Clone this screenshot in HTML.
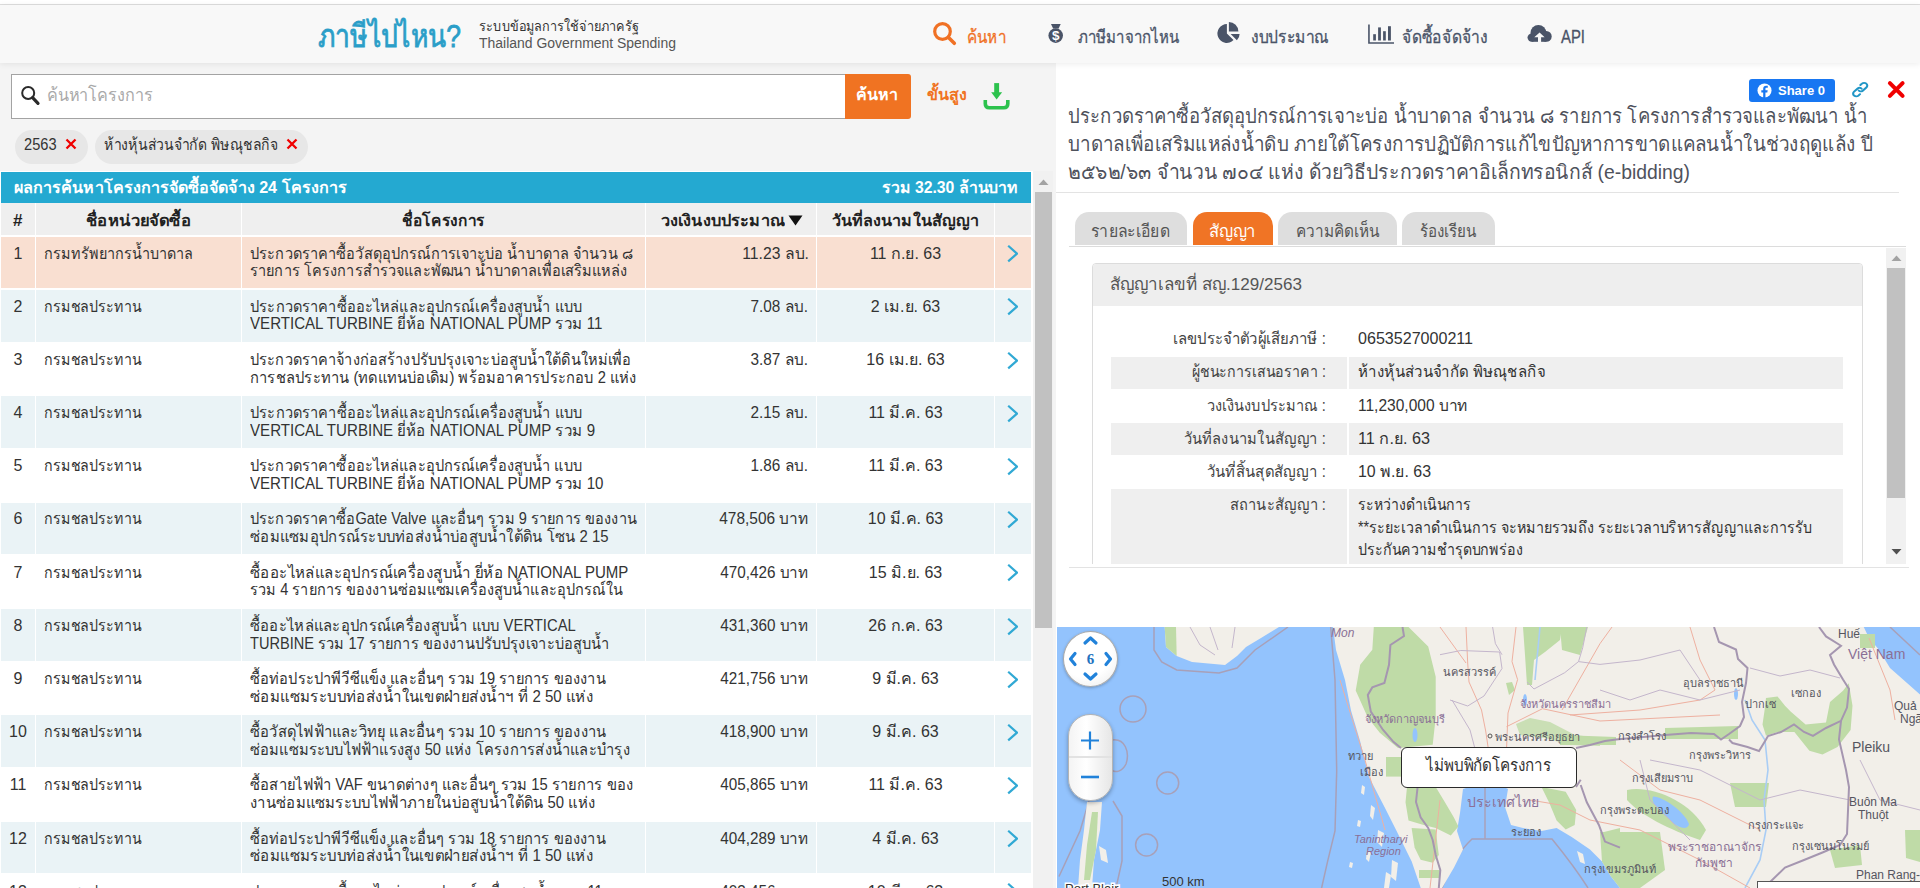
<!DOCTYPE html>
<html><head><meta charset="utf-8">
<style>
*{box-sizing:border-box}
html,body{margin:0;padding:0}
body{width:1920px;height:888px;overflow:hidden;position:relative;background:#f4f4f4;font-family:"Liberation Sans",sans-serif;color:#333}
.a{position:absolute}
.nw{white-space:nowrap}
#topw{left:0;top:0;width:1920px;height:4px;background:#fff}
#topline{left:0;top:4px;width:1920px;height:1px;background:#dedede}
#hdr{left:0;top:5px;width:1920px;height:58px;background:#f8f8f8;z-index:5;box-shadow:0 1px 6px rgba(0,0,0,0.08)}
.nav{top:17px;height:30px;line-height:30px;font-size:18px;-webkit-text-stroke:0.3px currentColor;color:#4a5468}
#right{left:1056px;top:63px;width:864px;height:825px;background:#fff}
.row .t{font-size:16px;color:#333;line-height:18px;top:7.8px}
.row .num{text-align:center}
.row .ag{left:44px}
.row .pj{left:250px}
.row .bd{right:223.5px;text-align:right}
.row .dt{left:817px;width:177px;text-align:center}
.row .chev{left:1006px;top:7.5px}
.th{font-size:16px;font-weight:bold;color:#222;top:211px;line-height:20px}
.tab{top:212px;height:33px;border-radius:14px 14px 0 0;background:#dedede}
.tabt{top:221px;font-size:17px;line-height:22px;color:#555}
.ttl{left:1068px;margin-top:1px;font-size:20px;line-height:28px;color:#4f525c}
.lbl{right:594px;margin-top:1px;font-size:16px;color:#444;line-height:20px}
.val{left:1358px;margin-top:1px;font-size:16px;color:#333;line-height:20px}
.grow{left:1111px;width:732px;background:#efefef}
.f{transform-origin:0 50%}
.fr{transform-origin:100% 50%}

</style></head><body>
<div id="topw" class="a"></div>
<div id="topline" class="a"></div>
<div id="hdr" class="a">
  <div class="a nw f" style="transform:scaleX(0.8276);--w:143px;left:318px;top:11px;font-size:32px;-webkit-text-stroke:0.8px #2a9ec8;color:#2a9ec8;line-height:40px">ภาษีไปไหน?</div>
  <div class="a nw f" style="transform:scaleX(0.904);--w:160px;left:479px;top:11px;font-size:14px;font-weight:500;color:#333;line-height:20px">ระบบข้อมูลการใช้จ่ายภาครัฐ</div>
  <div class="a nw f" style="transform:scaleX(0.9965);--w:197px;left:479px;top:28px;font-size:14px;color:#555;line-height:20px">Thailand Government Spending</div>
  <svg class="a" style="left:932px;top:16px" width="26" height="26" viewBox="0 0 26 26"><circle cx="10.5" cy="10.5" r="7.8" fill="none" stroke="#f07125" stroke-width="3.2"/><path d="M16.5 16.5 L22.3 22.3" stroke="#f07125" stroke-width="3.6" stroke-linecap="round"/></svg>
  <div class="a nw nav f" style="transform:scaleX(0.8478);--w:39px;left:967px;color:#f07125">ค้นหา</div>
  <svg class="a" style="left:1046px;top:17px" width="20" height="27" viewBox="0 0 20 27"><path d="M5 2 H14.7 L12.6 6.6 H7.1 Z" fill="#4a5468"/><circle cx="9.7" cy="13.6" r="7.3" fill="#4a5468"/><text x="9.8" y="18.4" font-size="13.5" font-weight="bold" fill="#fff" text-anchor="middle" font-family="Liberation Sans">$</text></svg>
  <div class="a nw nav f" style="transform:scaleX(0.8347);--w:101px;left:1078px">ภาษีมาจากไหน</div>
  <svg class="a" style="left:1216px;top:16px" width="26" height="24" viewBox="0 0 26 24"><path d="M10.9 3.1 A9.4 9.4 0 1 0 17.5 19.1 L10.9 12.5 Z" fill="#4a5468"/><path d="M12.9 10.5 V1.1 A9.5 9.5 0 0 1 22.4 10.5 Z" fill="#4a5468"/><path d="M14.6 12.9 H23.6 A9 9 0 0 1 20.9 19.3 Z" fill="#4a5468"/></svg>
  <div class="a nw nav f" style="transform:scaleX(0.8667);--w:78px;left:1251px">งบประมาณ</div>
  <svg class="a" style="left:1367px;top:19px" width="28" height="21" viewBox="0 0 28 21"><path d="M1.95 0.4 V18.95 H27" fill="none" stroke="#4a5468" stroke-width="1.6"/><rect x="6.2" y="10.2" width="2.7" height="6.3" fill="#4a5468"/><rect x="11.1" y="3.4" width="2.8" height="13.1" fill="#4a5468"/><rect x="16.1" y="7.2" width="2.7" height="9.3" fill="#4a5468"/><rect x="21" y="2.2" width="2.9" height="14.3" fill="#4a5468"/></svg>
  <div class="a nw nav f" style="transform:scaleX(0.8687);--w:86px;left:1402px">จัดซื้อจัดจ้าง</div>
  <svg class="a" style="left:1526px;top:19px" width="27" height="20" viewBox="0 0 27 20"><g fill="#4a5468"><circle cx="12.4" cy="8.9" r="7.9"/><circle cx="20.3" cy="12.4" r="5.4"/><circle cx="5.7" cy="13.6" r="4.2"/><rect x="5.7" y="10" width="14.6" height="7.8"/></g><path d="M8.3 13.2 L13.6 8.6 L18.6 13.3 L15.1 13.3 L15.1 19 L12 19 L12 13.2 Z" fill="#f8f8f8"/></svg>
  <div class="a nw nav f" style="transform:scaleX(0.8271);--w:24px;left:1561px">API</div>
</div>

<!-- search -->
<div class="a" style="left:11px;top:74px;width:835px;height:45px;background:#fff;border:1px solid #a3a3a3;border-right:none"></div>
<svg class="a" style="left:19px;top:85px" width="22" height="22" viewBox="0 0 22 22"><circle cx="9.2" cy="8" r="6" fill="none" stroke="#2a2a2a" stroke-width="2"/><path d="M13.6 12.6 L19 18.3" stroke="#2a2a2a" stroke-width="3.2" stroke-linecap="round"/></svg>
<div class="a nw f" style="transform:scaleX(0.8983);--w:106px;left:47px;top:83px;font-size:18px;line-height:24px;color:#a9a9a9">ค้นหาโครงการ</div>
<div class="a" style="left:845px;top:74px;width:66px;height:45px;background:#f07322;border-radius:0 3px 3px 0"></div>
<div class="a nw f" style="transform:scaleX(1);--w:42px;left:856px;top:84px;font-size:16px;font-weight:bold;line-height:22px;color:#fff">ค้นหา</div>
<div class="a nw f" style="transform:scaleX(1);--w:40px;left:927px;top:84px;font-size:16px;font-weight:bold;line-height:22px;color:#f07322">ขั้นสูง</div>
<svg class="a" style="left:982px;top:82px" width="29" height="29" viewBox="0 0 29 29"><path d="M14.65 1.1 V12" stroke="#2cc24d" stroke-width="4.9"/><path d="M9.2 10.2 L20.1 10.2 L14.65 17.6 Z" fill="#2cc24d"/><path d="M3.3 17.9 V21.8 Q3.3 25.8 7.3 25.8 H21.8 Q25.8 25.8 25.8 21.8 V17.9" fill="none" stroke="#2cc24d" stroke-width="3.6"/></svg>

<!-- chips -->
<div class="a" style="left:15px;top:130px;width:73px;height:34px;border-radius:17px;background:#e7e7e7"></div>
<div class="a nw f" style="transform:scaleX(0.9131);--w:32.5px;left:24px;top:136px;font-size:16px;line-height:18px;color:#333">2563</div>
<svg class="a" style="left:65px;top:138px" width="12" height="12" viewBox="0 0 12 12"><path d="M1.5 1.5 L10.5 10.5 M10.5 1.5 L1.5 10.5" stroke="#f00000" stroke-width="2.3"/></svg>
<div class="a" style="left:95px;top:130px;width:213px;height:34px;border-radius:17px;background:#e7e7e7"></div>
<div class="a nw f" style="transform:scaleX(0.8724);--w:174px;left:104px;top:136px;font-size:16px;line-height:18px;color:#333">ห้างหุ้นส่วนจำกัด พิษณุชลกิจ</div>
<svg class="a" style="left:286px;top:138px" width="12" height="12" viewBox="0 0 12 12"><path d="M1.5 1.5 L10.5 10.5 M10.5 1.5 L1.5 10.5" stroke="#f00000" stroke-width="2.3"/></svg>

<!-- results table -->
<div class="a" style="left:0;top:171px;width:1033px;height:717px;background:#fff"></div>
<div class="a" style="left:1px;top:172px;width:1030px;height:31px;background:#24a9d1"></div>
<div class="a nw f" style="transform:scaleX(1.007);--w:333px;left:14px;top:178px;font-size:16px;font-weight:bold;line-height:20px;color:#fff">ผลการค้นหาโครงการจัดซื้อจัดจ้าง 24 โครงการ</div>
<div class="a nw fr" style="transform:scaleX(0.986);--w:136px;right:902px;top:178px;font-size:16px;font-weight:bold;line-height:20px;color:#fff">รวม 32.30 ล้านบาท</div>
<div class="a" style="left:1px;top:203px;width:34px;height:31.7px;background:#efefef"></div>
<div class="a" style="left:36px;top:203px;width:205px;height:31.7px;background:#efefef"></div>
<div class="a" style="left:242px;top:203px;width:403px;height:31.7px;background:#efefef"></div>
<div class="a" style="left:646px;top:203px;width:170px;height:31.7px;background:#efefef"></div>
<div class="a" style="left:817px;top:203px;width:177px;height:31.7px;background:#efefef"></div>
<div class="a" style="left:995px;top:203px;width:36px;height:31.7px;background:#efefef"></div>
<div class="a nw th" style="left:13px;font-size:17px">#</div>
<div class="a nw th f" style="transform:scaleX(1.0396);--w:105px;left:86px">ชื่อหน่วยจัดซื้อ</div>
<div class="a nw th f" style="transform:scaleX(0.9651);--w:83px;left:402px">ชื่อโครงการ</div>
<div class="a nw th f" style="transform:scaleX(1.0164);--w:124px;left:661px">วงเงินงบประมาณ</div><svg class="a" style="left:788px;top:215px" width="15" height="11" viewBox="0 0 15 11"><path d="M0.5 0.5 H14.5 L7.5 10.5 Z" fill="#111"/></svg>
<div class="a nw th f" style="transform:scaleX(1.0068);--w:147px;left:832px">วันที่ลงนามในสัญญา</div>
<div class="a row" style="left:0;top:236.80px;width:1032px;height:51.7px"><div class="a" style="left:1px;top:0;width:34px;height:51.7px;background:#f9dfd1"></div><div class="a" style="left:36px;top:0;width:205px;height:51.7px;background:#f9dfd1"></div><div class="a" style="left:242px;top:0;width:403px;height:51.7px;background:#f9dfd1"></div><div class="a" style="left:646px;top:0;width:170px;height:51.7px;background:#f9dfd1"></div><div class="a" style="left:817px;top:0;width:177px;height:51.7px;background:#f9dfd1"></div><div class="a" style="left:995px;top:0;width:36px;height:51.7px;background:#f9dfd1"></div><div class="a nw t num" style="left:1px;width:34px">1</div><div class="a nw t ag f" style="transform:scaleX(0.8976);--w:149px">กรมทรัพยากรน้ำบาดาล</div><div class="a nw t pj f" style="transform:scaleX(0.908);--w:382.6px">ประกวดราคาซื้อวัสดุอุปกรณ์การเจาะบ่อ น้ำบาดาล จำนวน ๘</div><div class="a nw t pj f" style="transform:scaleX(0.906);--w:377.7px;top:25.5px">รายการ โครงการสำรวจและพัฒนา น้ำบาดาลเพื่อเสริมแหล่ง</div><div class="a nw t bd fr" style="transform:scaleX(0.9815);--w:66.5px">11.23 ลบ.</div><div class="a nw t dt">11 ก.ย. 63</div><svg class="a chev" width="12" height="20" viewBox="0 0 12 20"><path d="M2.2 1.8 L11 9.6 L2.2 17.4" fill="none" stroke="#31a9d4" stroke-width="2.2"/></svg></div>
<div class="a row" style="left:0;top:289.98px;width:1032px;height:51.7px"><div class="a" style="left:1px;top:0;width:34px;height:51.7px;background:#eaf3f6"></div><div class="a" style="left:36px;top:0;width:205px;height:51.7px;background:#eaf3f6"></div><div class="a" style="left:242px;top:0;width:403px;height:51.7px;background:#eaf3f6"></div><div class="a" style="left:646px;top:0;width:170px;height:51.7px;background:#eaf3f6"></div><div class="a" style="left:817px;top:0;width:177px;height:51.7px;background:#eaf3f6"></div><div class="a" style="left:995px;top:0;width:36px;height:51.7px;background:#eaf3f6"></div><div class="a nw t num" style="left:1px;width:34px">2</div><div class="a nw t ag f" style="transform:scaleX(0.8864);--w:97.5px">กรมชลประทาน</div><div class="a nw t pj f" style="transform:scaleX(0.911);--w:332px">ประกวดราคาซื้ออะไหล่และอุปกรณ์เครื่องสูบน้ำ แบบ</div><div class="a nw t pj f" style="transform:scaleX(0.9429);--w:352.4px;top:25.5px">VERTICAL TURBINE ยี่ห้อ NATIONAL PUMP รวม 11</div><div class="a nw t bd fr" style="transform:scaleX(0.9578);--w:57.5px">7.08 ลบ.</div><div class="a nw t dt">2 เม.ย. 63</div><svg class="a chev" width="12" height="20" viewBox="0 0 12 20"><path d="M2.2 1.8 L11 9.6 L2.2 17.4" fill="none" stroke="#31a9d4" stroke-width="2.2"/></svg></div>
<div class="a row" style="left:0;top:343.16px;width:1032px;height:51.7px"><div class="a" style="left:1px;top:0;width:34px;height:51.7px;background:#ffffff"></div><div class="a" style="left:36px;top:0;width:205px;height:51.7px;background:#ffffff"></div><div class="a" style="left:242px;top:0;width:403px;height:51.7px;background:#ffffff"></div><div class="a" style="left:646px;top:0;width:170px;height:51.7px;background:#ffffff"></div><div class="a" style="left:817px;top:0;width:177px;height:51.7px;background:#ffffff"></div><div class="a" style="left:995px;top:0;width:36px;height:51.7px;background:#ffffff"></div><div class="a nw t num" style="left:1px;width:34px">3</div><div class="a nw t ag f" style="transform:scaleX(0.8864);--w:97.5px">กรมชลประทาน</div><div class="a nw t pj f" style="transform:scaleX(0.9081);--w:381.4px">ประกวดราคาจ้างก่อสร้างปรับปรุงเจาะบ่อสูบน้ำใต้ดินใหม่เพื่อ</div><div class="a nw t pj f" style="transform:scaleX(0.92);--w:386.7px;top:25.5px">การชลประทาน (ทดแทนบ่อเดิม) พร้อมอาคารประกอบ 2 แห่ง</div><div class="a nw t bd fr" style="transform:scaleX(0.9578);--w:57.5px">3.87 ลบ.</div><div class="a nw t dt">16 เม.ย. 63</div><svg class="a chev" width="12" height="20" viewBox="0 0 12 20"><path d="M2.2 1.8 L11 9.6 L2.2 17.4" fill="none" stroke="#31a9d4" stroke-width="2.2"/></svg></div>
<div class="a row" style="left:0;top:396.34px;width:1032px;height:51.7px"><div class="a" style="left:1px;top:0;width:34px;height:51.7px;background:#eaf3f6"></div><div class="a" style="left:36px;top:0;width:205px;height:51.7px;background:#eaf3f6"></div><div class="a" style="left:242px;top:0;width:403px;height:51.7px;background:#eaf3f6"></div><div class="a" style="left:646px;top:0;width:170px;height:51.7px;background:#eaf3f6"></div><div class="a" style="left:817px;top:0;width:177px;height:51.7px;background:#eaf3f6"></div><div class="a" style="left:995px;top:0;width:36px;height:51.7px;background:#eaf3f6"></div><div class="a nw t num" style="left:1px;width:34px">4</div><div class="a nw t ag f" style="transform:scaleX(0.8864);--w:97.5px">กรมชลประทาน</div><div class="a nw t pj f" style="transform:scaleX(0.911);--w:332px">ประกวดราคาซื้ออะไหล่และอุปกรณ์เครื่องสูบน้ำ แบบ</div><div class="a nw t pj f" style="transform:scaleX(0.943);--w:345.2px;top:25.5px">VERTICAL TURBINE ยี่ห้อ NATIONAL PUMP รวม 9</div><div class="a nw t bd fr" style="transform:scaleX(0.9578);--w:57.5px">2.15 ลบ.</div><div class="a nw t dt">11 มี.ค. 63</div><svg class="a chev" width="12" height="20" viewBox="0 0 12 20"><path d="M2.2 1.8 L11 9.6 L2.2 17.4" fill="none" stroke="#31a9d4" stroke-width="2.2"/></svg></div>
<div class="a row" style="left:0;top:449.52px;width:1032px;height:51.7px"><div class="a" style="left:1px;top:0;width:34px;height:51.7px;background:#ffffff"></div><div class="a" style="left:36px;top:0;width:205px;height:51.7px;background:#ffffff"></div><div class="a" style="left:242px;top:0;width:403px;height:51.7px;background:#ffffff"></div><div class="a" style="left:646px;top:0;width:170px;height:51.7px;background:#ffffff"></div><div class="a" style="left:817px;top:0;width:177px;height:51.7px;background:#ffffff"></div><div class="a" style="left:995px;top:0;width:36px;height:51.7px;background:#ffffff"></div><div class="a nw t num" style="left:1px;width:34px">5</div><div class="a nw t ag f" style="transform:scaleX(0.8864);--w:97.5px">กรมชลประทาน</div><div class="a nw t pj f" style="transform:scaleX(0.9104);--w:331.8px">ประกวดราคาซื้ออะไหล่และอุปกรณ์เครื่องสูบน้ำ แบบ</div><div class="a nw t pj f" style="transform:scaleX(0.9426);--w:353.4px;top:25.5px">VERTICAL TURBINE ยี่ห้อ NATIONAL PUMP รวม 10</div><div class="a nw t bd fr" style="transform:scaleX(0.9578);--w:57.5px">1.86 ลบ.</div><div class="a nw t dt">11 มี.ค. 63</div><svg class="a chev" width="12" height="20" viewBox="0 0 12 20"><path d="M2.2 1.8 L11 9.6 L2.2 17.4" fill="none" stroke="#31a9d4" stroke-width="2.2"/></svg></div>
<div class="a row" style="left:0;top:502.70px;width:1032px;height:51.7px"><div class="a" style="left:1px;top:0;width:34px;height:51.7px;background:#eaf3f6"></div><div class="a" style="left:36px;top:0;width:205px;height:51.7px;background:#eaf3f6"></div><div class="a" style="left:242px;top:0;width:403px;height:51.7px;background:#eaf3f6"></div><div class="a" style="left:646px;top:0;width:170px;height:51.7px;background:#eaf3f6"></div><div class="a" style="left:817px;top:0;width:177px;height:51.7px;background:#eaf3f6"></div><div class="a" style="left:995px;top:0;width:36px;height:51.7px;background:#eaf3f6"></div><div class="a nw t num" style="left:1px;width:34px">6</div><div class="a nw t ag f" style="transform:scaleX(0.8864);--w:97.5px">กรมชลประทาน</div><div class="a nw t pj f" style="transform:scaleX(0.9099);--w:386.8px">ประกวดราคาซื้อGate Valve และอื่นๆ รวม 9 รายการ ของงาน</div><div class="a nw t pj f" style="transform:scaleX(0.9311);--w:358.5px;top:25.5px">ซ่อมแซมอุปกรณ์ระบบท่อส่งน้ำบ่อสูบน้ำใต้ดิน โซน 2 15</div><div class="a nw t bd fr" style="transform:scaleX(0.9644);--w:89px">478,506 บาท</div><div class="a nw t dt">10 มี.ค. 63</div><svg class="a chev" width="12" height="20" viewBox="0 0 12 20"><path d="M2.2 1.8 L11 9.6 L2.2 17.4" fill="none" stroke="#31a9d4" stroke-width="2.2"/></svg></div>
<div class="a row" style="left:0;top:555.88px;width:1032px;height:51.7px"><div class="a" style="left:1px;top:0;width:34px;height:51.7px;background:#ffffff"></div><div class="a" style="left:36px;top:0;width:205px;height:51.7px;background:#ffffff"></div><div class="a" style="left:242px;top:0;width:403px;height:51.7px;background:#ffffff"></div><div class="a" style="left:646px;top:0;width:170px;height:51.7px;background:#ffffff"></div><div class="a" style="left:817px;top:0;width:177px;height:51.7px;background:#ffffff"></div><div class="a" style="left:995px;top:0;width:36px;height:51.7px;background:#ffffff"></div><div class="a nw t num" style="left:1px;width:34px">7</div><div class="a nw t ag f" style="transform:scaleX(0.8864);--w:97.5px">กรมชลประทาน</div><div class="a nw t pj f" style="transform:scaleX(0.9392);--w:378.3px">ซื้ออะไหล่และอุปกรณ์เครื่องสูบน้ำ ยี่ห้อ NATIONAL PUMP</div><div class="a nw t pj f" style="transform:scaleX(0.9041);--w:372.7px;top:25.5px">รวม 4 รายการ ของงานซ่อมแซมเครื่องสูบน้ำและอุปกรณ์ใน</div><div class="a nw t bd fr" style="transform:scaleX(0.9536);--w:88px">470,426 บาท</div><div class="a nw t dt">15 มิ.ย. 63</div><svg class="a chev" width="12" height="20" viewBox="0 0 12 20"><path d="M2.2 1.8 L11 9.6 L2.2 17.4" fill="none" stroke="#31a9d4" stroke-width="2.2"/></svg></div>
<div class="a row" style="left:0;top:609.06px;width:1032px;height:51.7px"><div class="a" style="left:1px;top:0;width:34px;height:51.7px;background:#eaf3f6"></div><div class="a" style="left:36px;top:0;width:205px;height:51.7px;background:#eaf3f6"></div><div class="a" style="left:242px;top:0;width:403px;height:51.7px;background:#eaf3f6"></div><div class="a" style="left:646px;top:0;width:170px;height:51.7px;background:#eaf3f6"></div><div class="a" style="left:817px;top:0;width:177px;height:51.7px;background:#eaf3f6"></div><div class="a" style="left:995px;top:0;width:36px;height:51.7px;background:#eaf3f6"></div><div class="a nw t num" style="left:1px;width:34px">8</div><div class="a nw t ag f" style="transform:scaleX(0.8864);--w:97.5px">กรมชลประทาน</div><div class="a nw t pj f" style="transform:scaleX(0.926);--w:325.8px">ซื้ออะไหล่และอุปกรณ์เครื่องสูบน้ำ แบบ VERTICAL</div><div class="a nw t pj f" style="transform:scaleX(0.9103);--w:359.4px;top:25.5px">TURBINE รวม 17 รายการ ของงานปรับปรุงเจาะบ่อสูบน้ำ</div><div class="a nw t bd fr" style="transform:scaleX(0.9536);--w:88px">431,360 บาท</div><div class="a nw t dt">26 ก.ค. 63</div><svg class="a chev" width="12" height="20" viewBox="0 0 12 20"><path d="M2.2 1.8 L11 9.6 L2.2 17.4" fill="none" stroke="#31a9d4" stroke-width="2.2"/></svg></div>
<div class="a row" style="left:0;top:662.24px;width:1032px;height:51.7px"><div class="a" style="left:1px;top:0;width:34px;height:51.7px;background:#ffffff"></div><div class="a" style="left:36px;top:0;width:205px;height:51.7px;background:#ffffff"></div><div class="a" style="left:242px;top:0;width:403px;height:51.7px;background:#ffffff"></div><div class="a" style="left:646px;top:0;width:170px;height:51.7px;background:#ffffff"></div><div class="a" style="left:817px;top:0;width:177px;height:51.7px;background:#ffffff"></div><div class="a" style="left:995px;top:0;width:36px;height:51.7px;background:#ffffff"></div><div class="a nw t num" style="left:1px;width:34px">9</div><div class="a nw t ag f" style="transform:scaleX(0.8864);--w:97.5px">กรมชลประทาน</div><div class="a nw t pj f" style="transform:scaleX(0.9143);--w:355.7px">ซื้อท่อประปาพีวีซีแข็ง และอื่นๆ รวม 19 รายการ ของงาน</div><div class="a nw t pj f" style="transform:scaleX(0.9416);--w:343.2px;top:25.5px">ซ่อมแซมระบบท่อส่งน้ำในเขตฝ่ายส่งน้ำฯ ที่ 2 50 แห่ง</div><div class="a nw t bd fr" style="transform:scaleX(0.9536);--w:88px">421,756 บาท</div><div class="a nw t dt">9 มี.ค. 63</div><svg class="a chev" width="12" height="20" viewBox="0 0 12 20"><path d="M2.2 1.8 L11 9.6 L2.2 17.4" fill="none" stroke="#31a9d4" stroke-width="2.2"/></svg></div>
<div class="a row" style="left:0;top:715.42px;width:1032px;height:51.7px"><div class="a" style="left:1px;top:0;width:34px;height:51.7px;background:#eaf3f6"></div><div class="a" style="left:36px;top:0;width:205px;height:51.7px;background:#eaf3f6"></div><div class="a" style="left:242px;top:0;width:403px;height:51.7px;background:#eaf3f6"></div><div class="a" style="left:646px;top:0;width:170px;height:51.7px;background:#eaf3f6"></div><div class="a" style="left:817px;top:0;width:177px;height:51.7px;background:#eaf3f6"></div><div class="a" style="left:995px;top:0;width:36px;height:51.7px;background:#eaf3f6"></div><div class="a nw t num" style="left:1px;width:34px">10</div><div class="a nw t ag f" style="transform:scaleX(0.8864);--w:97.5px">กรมชลประทาน</div><div class="a nw t pj f" style="transform:scaleX(0.9211);--w:356.5px">ซื้อวัสดุไฟฟ้าและวิทยุ และอื่นๆ รวม 10 รายการ ของงาน</div><div class="a nw t pj f" style="transform:scaleX(0.9173);--w:379.9px;top:25.5px">ซ่อมแซมระบบไฟฟ้าแรงสูง 50 แห่ง โครงการส่งน้ำและบำรุง</div><div class="a nw t bd fr" style="transform:scaleX(0.9536);--w:88px">418,900 บาท</div><div class="a nw t dt">9 มี.ค. 63</div><svg class="a chev" width="12" height="20" viewBox="0 0 12 20"><path d="M2.2 1.8 L11 9.6 L2.2 17.4" fill="none" stroke="#31a9d4" stroke-width="2.2"/></svg></div>
<div class="a row" style="left:0;top:768.60px;width:1032px;height:51.7px"><div class="a" style="left:1px;top:0;width:34px;height:51.7px;background:#ffffff"></div><div class="a" style="left:36px;top:0;width:205px;height:51.7px;background:#ffffff"></div><div class="a" style="left:242px;top:0;width:403px;height:51.7px;background:#ffffff"></div><div class="a" style="left:646px;top:0;width:170px;height:51.7px;background:#ffffff"></div><div class="a" style="left:817px;top:0;width:177px;height:51.7px;background:#ffffff"></div><div class="a" style="left:995px;top:0;width:36px;height:51.7px;background:#ffffff"></div><div class="a nw t num" style="left:1px;width:34px">11</div><div class="a nw t ag f" style="transform:scaleX(0.8864);--w:97.5px">กรมชลประทาน</div><div class="a nw t pj f" style="transform:scaleX(0.922);--w:383.4px">ซื้อสายไฟฟ้า VAF ขนาดต่างๆ และอื่นๆ รวม 15 รายการ ของ</div><div class="a nw t pj f" style="transform:scaleX(0.9287);--w:345.2px;top:25.5px">งานซ่อมแซมระบบไฟฟ้าภายในบ่อสูบน้ำใต้ดิน 50 แห่ง</div><div class="a nw t bd fr" style="transform:scaleX(0.9536);--w:88px">405,865 บาท</div><div class="a nw t dt">11 มี.ค. 63</div><svg class="a chev" width="12" height="20" viewBox="0 0 12 20"><path d="M2.2 1.8 L11 9.6 L2.2 17.4" fill="none" stroke="#31a9d4" stroke-width="2.2"/></svg></div>
<div class="a row" style="left:0;top:821.78px;width:1032px;height:51.7px"><div class="a" style="left:1px;top:0;width:34px;height:51.7px;background:#eaf3f6"></div><div class="a" style="left:36px;top:0;width:205px;height:51.7px;background:#eaf3f6"></div><div class="a" style="left:242px;top:0;width:403px;height:51.7px;background:#eaf3f6"></div><div class="a" style="left:646px;top:0;width:170px;height:51.7px;background:#eaf3f6"></div><div class="a" style="left:817px;top:0;width:177px;height:51.7px;background:#eaf3f6"></div><div class="a" style="left:995px;top:0;width:36px;height:51.7px;background:#eaf3f6"></div><div class="a nw t num" style="left:1px;width:34px">12</div><div class="a nw t ag f" style="transform:scaleX(0.8864);--w:97.5px">กรมชลประทาน</div><div class="a nw t pj f" style="transform:scaleX(0.9143);--w:355.7px">ซื้อท่อประปาพีวีซีแข็ง และอื่นๆ รวม 18 รายการ ของงาน</div><div class="a nw t pj f" style="transform:scaleX(0.9416);--w:343.2px;top:25.5px">ซ่อมแซมระบบท่อส่งน้ำในเขตฝ่ายส่งน้ำฯ ที่ 1 50 แห่ง</div><div class="a nw t bd fr" style="transform:scaleX(0.9536);--w:88px">404,289 บาท</div><div class="a nw t dt">4 มี.ค. 63</div><svg class="a chev" width="12" height="20" viewBox="0 0 12 20"><path d="M2.2 1.8 L11 9.6 L2.2 17.4" fill="none" stroke="#31a9d4" stroke-width="2.2"/></svg></div>
<div class="a row" style="left:0;top:874.96px;width:1032px;height:60px"><div class="a" style="left:1px;top:0;width:34px;height:60px;background:#ffffff"></div><div class="a" style="left:36px;top:0;width:205px;height:60px;background:#ffffff"></div><div class="a" style="left:242px;top:0;width:403px;height:60px;background:#ffffff"></div><div class="a" style="left:646px;top:0;width:170px;height:60px;background:#ffffff"></div><div class="a" style="left:817px;top:0;width:177px;height:60px;background:#ffffff"></div><div class="a" style="left:995px;top:0;width:36px;height:60px;background:#ffffff"></div><div class="a nw t num" style="left:1px;width:34px">13</div><div class="a nw t ag f" style="transform:scaleX(0.8864);--w:97.5px">กรมชลประทาน</div><div class="a nw t pj f" style="transform:scaleX(0.9173);--w:352.7px">ประกวดราคาซื้ออะไหล่และอุปกรณ์เครื่องสูบน้ำ รวม 11</div><div class="a nw t pj f" style="transform:scaleX(0.9951);--w:151px;top:25.5px">VERTICAL TURBINE</div><div class="a nw t bd fr" style="transform:scaleX(0.9536);--w:88px">403,456 บาท</div><div class="a nw t dt">10 มี.ค. 63</div><svg class="a chev" width="12" height="20" viewBox="0 0 12 20"><path d="M2.2 1.8 L11 9.6 L2.2 17.4" fill="none" stroke="#31a9d4" stroke-width="2.2"/></svg></div>
<!-- left scrollbar -->
<div class="a" style="left:1033px;top:171px;width:20px;height:717px;background:#f1f1f1"></div>
<svg class="a" style="left:1038px;top:178px" width="11" height="8" viewBox="0 0 11 8"><path d="M0.5 7 L5.5 1.5 L10.5 7 Z" fill="#a3a3a3"/></svg>
<div class="a" style="left:1035px;top:192px;width:17px;height:436px;background:#c1c1c1"></div>

<!-- right panel -->
<div id="right" class="a"></div>
<div class="a" style="left:1749px;top:79px;width:86px;height:23px;background:#1877f2;border-radius:3px"></div>
<svg class="a" style="left:1757px;top:83px" width="15" height="15" viewBox="0 0 16 16"><circle cx="8" cy="8" r="7.5" fill="#fff"/><path d="M9 16 V10 H11 L11.4 7.6 H9 V6.2 C9 5.5 9.3 5.1 10.1 5.1 H11.5 V3 C11 2.9 10.3 2.9 9.7 2.9 C7.8 2.9 6.6 4 6.6 6 V7.6 H4.6 V10 H6.6 V16 Z" fill="#1877f2"/></svg>
<div class="a nw" style="left:1778px;top:82px;font-size:13px;font-weight:bold;line-height:17px;color:#fff">Share 0</div>
<svg class="a" style="left:1850px;top:80px" width="20" height="19" viewBox="0 0 20 19"><g transform="translate(10.2 9.6) scale(0.97 0.86) translate(-10 -9.5)"><path d="M8.5 10.5 C9.5 11.8 11.3 12 12.6 10.8 L16.3 7.1 C17.6 5.8 17.6 3.8 16.3 2.6 C15 1.3 13 1.3 11.8 2.6 L10.2 4.2" fill="none" stroke="#2196c6" stroke-width="2.2" stroke-linecap="round"/><path d="M11.5 8.5 C10.5 7.2 8.7 7 7.4 8.2 L3.7 11.9 C2.4 13.2 2.4 15.2 3.7 16.4 C5 17.7 7 17.7 8.2 16.4 L9.8 14.8" fill="none" stroke="#2196c6" stroke-width="2.2" stroke-linecap="round"/></g></svg>
<svg class="a" style="left:1886px;top:80px" width="21" height="20" viewBox="0 0 21 20"><path d="M3.9 3.2 L16.6 15.9 M16.6 3.2 L3.9 15.9" stroke="#f00000" stroke-width="4" stroke-linecap="round"/></svg>

<div class="a nw f ttl" style="transform:scaleX(0.9265);--w:799px;top:101px">ประกวดราคาซื้อวัสดุอุปกรณ์การเจาะบ่อ น้ำบาดาล จำนวน ๘ รายการ โครงการสำรวจและพัฒนา น้ำ</div>
<div class="a nw f ttl" style="transform:scaleX(0.9436);--w:805px;top:129px">บาดาลเพื่อเสริมแหล่งน้ำดิบ ภายใต้โครงการปฏิบัติการแก้ไขปัญหาการขาดแคลนน้ำในช่วงฤดูแล้ง ปี</div>
<div class="a nw f ttl" style="transform:scaleX(0.9674);--w:622px;top:157px">๒๕๖๒/๖๓ จำนวน ๗๐๔ แห่ง ด้วยวิธีประกวดราคาอิเล็กทรอนิกส์ (e-bidding)</div>
<div class="a" style="left:1056px;top:192px;width:843px;height:1px;background:#e3e3e3"></div>

<div class="a tab" style="left:1075px;width:112px"></div><div class="a nw tabt f" style="transform:scaleX(0.9294);--w:79px;left:1091px">รายละเอียด</div>
<div class="a tab" style="left:1193px;width:80px;background:#f07425"></div><div class="a nw tabt f" style="transform:scaleX(0.9792);--w:47px;left:1209px;color:#fff">สัญญา</div>
<div class="a tab" style="left:1278px;width:119px"></div><div class="a nw tabt f" style="transform:scaleX(0.9032);--w:84px;left:1296px">ความคิดเห็น</div>
<div class="a tab" style="left:1402px;width:93px"></div><div class="a nw tabt f" style="transform:scaleX(0.8906);--w:57px;left:1420px">ร้องเรียน</div>
<div class="a" style="left:1069px;top:246px;width:837px;height:1px;background:#dcdcdc"></div>

<!-- contract box -->
<div class="a" style="left:1092px;top:263px;width:771px;height:320px;border:1px solid #dcdcdc;border-radius:4px;background:#fff"></div>
<div class="a" style="left:1093px;top:264px;width:769px;height:42px;background:#eee;border-radius:3px 3px 0 0"></div>
<div class="a nw f" style="transform:scaleX(1.0033);--w:192px;left:1110px;top:274px;font-size:17px;line-height:22px;color:#555">สัญญาเลขที่ สญ.129/2563</div>
<div class="a grow" style="top:357px;height:32px"></div>
<div class="a grow" style="top:423px;height:32px"></div>
<div class="a grow" style="top:489px;height:80px"></div>
<div class="a" style="left:1347px;top:357px;width:2px;height:32px;background:#fff"></div>
<div class="a" style="left:1347px;top:423px;width:2px;height:32px;background:#fff"></div>
<div class="a" style="left:1347px;top:489px;width:2px;height:80px;background:#fff"></div>
<div class="a nw lbl fr" style="transform:scaleX(0.9335);--w:153px;top:328px">เลขประจำตัวผู้เสียภาษี :</div>
<div class="a nw lbl fr" style="transform:scaleX(0.8881);--w:134px;top:361px">ผู้ชนะการเสนอราคา :</div>
<div class="a nw lbl fr" style="transform:scaleX(0.9092);--w:119px;top:395px">วงเงินงบประมาณ :</div>
<div class="a nw lbl fr" style="transform:scaleX(0.9168);--w:142px;top:428px">วันที่ลงนามในสัญญา :</div>
<div class="a nw lbl fr" style="transform:scaleX(0.9305);--w:119px;top:461px">วันที่สิ้นสุดสัญญา :</div>
<div class="a nw lbl fr" style="transform:scaleX(0.9152);--w:96px;top:494px">สถานะสัญญา :</div>
<div class="a nw val f" style="transform:scaleX(1.0044);--w:115px;top:328px">0653527000211</div>
<div class="a nw val f" style="transform:scaleX(0.9376);--w:187px;top:361px">ห้างหุ้นส่วนจำกัด พิษณุชลกิจ</div>
<div class="a nw val f" style="transform:scaleX(0.9705);--w:110px;top:395px">11,230,000 บาท</div>
<div class="a nw val f" style="transform:scaleX(1.0114);--w:72px;top:428px">11 ก.ย. 63</div>
<div class="a nw val f" style="transform:scaleX(0.9949);--w:73px;top:461px">10 พ.ย. 63</div>
<div class="a nw val f" style="transform:scaleX(0.876);--w:113px;top:494px">ระหว่างดำเนินการ</div>
<div class="a nw val f" style="transform:scaleX(0.8913);--w:454px;top:517px">**ระยะเวลาดำเนินการ จะหมายรวมถึง ระยะเวลาบริหารสัญญาและการรับ</div>
<div class="a nw val f" style="transform:scaleX(0.8871);--w:165px;top:539px">ประกันความชำรุดบกพร่อง</div>
<!-- mask below scroll area -->
<div class="a" style="left:1056px;top:564px;width:864px;height:63px;background:#fff"></div>
<div class="a" style="left:1069px;top:567px;width:840px;height:1px;background:#e3e3e3"></div>
<!-- right scrollbar -->
<div class="a" style="left:1886px;top:248px;width:20px;height:316px;background:#f1f1f1"></div>
<svg class="a" style="left:1891px;top:254px" width="11" height="8" viewBox="0 0 11 8"><path d="M0.5 7 L5.5 1.5 L10.5 7 Z" fill="#a3a3a3"/></svg>
<div class="a" style="left:1887px;top:268px;width:18px;height:230px;background:#c1c1c1"></div>
<svg class="a" style="left:1891px;top:548px" width="11" height="8" viewBox="0 0 11 8"><path d="M0.5 1 L5.5 6.5 L10.5 1 Z" fill="#505050"/></svg>

<!-- map -->
<svg class="a" style="left:1057px;top:627px" width="863" height="261" viewBox="1057 627 863 261">
<rect x="1057" y="627" width="863" height="261" fill="#93c3fd"/>
<!-- maritime boundary lines -->
<g fill="none" stroke="#a8a0b8" stroke-width="1.5">
<path d="M1154 627 L1154 650 L1161.7 662 L1176.7 670 L1219 673 L1237 668 L1255 650 L1288 627"/>
<path d="M1330.7 627 L1335 680 L1336.7 771 L1335 831 L1327.6 861.4 L1321.6 888"/>
<path d="M1089 801 L1080 831 L1059 876.5"/>
<path d="M1113 801 L1122 816 L1122 861 L1116 888"/>
<circle cx="1133" cy="709" r="13"/>
<circle cx="1167.7" cy="783" r="11"/>
<circle cx="1146.6" cy="845" r="11"/>
<path d="M1112 740 C1125 738 1130 752 1126 764 C1122 772 1115 773 1112 770"/>
<path d="M1442 888 C1450 870 1455 855 1472 839 L1552 839 C1565 855 1578 872 1588 888"/>
<path d="M1485 787 L1485 839"/>
<path d="M1890 627 L1920 655"/>
</g>
<!-- land -->
<g fill="#f2efe9">
<path d="M1164.7 627 L1166 647 L1176.7 656 L1192 662 L1225 665 L1237 656 L1246 647 L1261 638 L1279 627 Z"/>
<path d="M1333 627 L1863.75 627 L1869 638 L1878.75 649.5 L1890 668 L1907 683 L1920 694.5 L1920 888 L1620 888 L1611 876.6 L1602 861.5 L1590 849.4 L1571.7 837 L1556.6 828 L1541.5 831 L1523 828 L1511 825 L1505 807 L1508 789 L1490 780 L1463 789 L1460 813 L1457 831 L1463 849.4 L1454 867.5 L1442 888 L1420.75 888 L1411.7 861.5 L1396.6 831 L1384.5 807 L1369 777 L1360 740.75 L1351 710.6 L1345 680 L1336 650 Z"/>
<path d="M1087 802 L1102 802 L1100 830 L1094 860 L1092 888 L1078 888 L1080 860 L1084 830 Z"/>
<path d="M1099 846 L1106 850 L1108 863 L1101 860 Z"/>
</g>
<!-- islands -->
<g fill="#f2efe9">
<path d="M1362 785 l3 2 l-1 8 l-3 -2 Z"/><path d="M1371 805 l4 3 l-2 12 l-3 -4 Z"/><path d="M1378 830 l6 3 l-2 14 l-5 -5 Z"/>
<path d="M1367 850 l4 2 l-2 10 l-3 -3 Z"/><path d="M1392 860 l6 3 l-2 18 l-5 -4 Z"/><path d="M1358 820 l3 1 l-1 6 l-3 -1 Z"/>
<path d="M1386 872 l5 3 l-2 13 l-5 0 Z"/><path d="M1350 862 l3 1 l-1 5 l-3 -1 Z"/>
<path d="M1577 851 l6 3 l2 10 l-5 -2 Z"/>
</g>
<!-- green -->
<g fill="#bfdba7">
<path d="M1164.7 627 L1176 627 L1176.7 656 L1166 647 Z"/>
<path d="M1373.8 627 L1408.5 627 L1428.2 646.6 L1435.7 676.8 L1435.7 717.6 L1432.7 744.8 L1398 748 L1379.8 732.7 L1367.8 717.6 L1355.7 690.4 L1360.2 664.8 L1372.3 649.7 Z"/>
<path d="M1523 627 L1562 627 L1560 640 L1545 652 L1534 660 L1532 685 L1527 685 L1525 655 Z"/>
<path d="M1506 683 L1512 682 L1515 690 L1509 695 Z"/>
<path d="M1516 724 L1530 718 L1550 722 L1575 735 L1600 738 L1600 746 L1570 745 L1545 738 L1520 735 Z" opacity="0.8"/>
<path d="M1560 735 L1616 737 L1616 745 L1560 745 Z"/>
<path d="M1665 728 L1738 726 L1738 739 L1665 739 Z"/>
<path d="M1560 627 L1588 627 L1580 655 L1562 650 Z"/>
<path d="M1386 757 L1401 757 L1401 776.6 L1386 776.6 Z"/>
<path d="M1407 787 L1435.7 787 L1444.8 802 L1453.9 817.4 L1458.4 826.5 L1450.8 835.5 L1435.7 828 L1423.7 825 L1408.5 820.4 L1405.5 802.3 Z"/>
<path d="M1411.6 828 L1435.7 829.5 L1438.8 855 L1432.7 862.7 L1420.6 859.7 L1414.6 847.6 Z"/>
<path d="M1419 870 L1440 870 L1440 878 L1419 878 Z"/>
<path d="M1541.5 787 L1565.7 791.7 L1576.2 809.9 L1574.7 825 L1565.7 829.5 L1556.6 820.4 L1549 802.3 Z"/>
<path d="M1602 832.5 L1620 828 L1620 862.7 L1609.5 855 Z"/>
<path d="M1766 698 L1777.5 696.4 L1785 705.75 L1790.6 711.4 L1805.6 724.5 L1826 722.6 L1830 702 L1843 690.75 L1848.8 683.25 L1852.5 705.75 L1850.6 730 L1837.5 747 L1822.5 754.5 L1809.4 750.75 L1794.4 732 L1777.5 732 L1766 735.75 L1762.5 724.5 L1764.4 711.4 Z"/>
<path d="M1860 634 L1875 634 L1875 648 L1860 648 Z"/>
<path d="M1730 783 L1769 783 L1766 807 L1735 807 Z"/>
<path d="M1627 790 C1650 785 1690 800 1706 830 L1700 840 C1670 830 1640 815 1627 800 Z"/>
<path d="M1600 832 L1660 832 L1665 870 L1640 888 L1620 888 L1611 876.6 L1602 861.5 Z"/>
<path d="M1905 830 L1920 830 L1920 862 L1906 858 Z"/>
<path d="M1830 850 L1860 845 L1862 865 L1835 868 Z"/>
<path d="M1092 812 L1098 812 L1096 850 L1090 880 L1084 880 L1087 845 Z"/>
</g>
<!-- lakes -->
<g fill="#93c3fd">
<path d="M1653 796.6 C1662 796 1685 812 1689 824 C1688 830 1680 829 1672 822 C1662 813 1650 803 1653 796.6 Z"/>
<ellipse cx="1415" cy="735" rx="2.5" ry="7"/>
<ellipse cx="1736" cy="694" rx="2" ry="6"/>
<ellipse cx="1525" cy="700" rx="2" ry="6"/>
</g>
<!-- rivers -->
<g fill="none" stroke="#a9cdf5" stroke-width="1.6">
<path d="M1745 700 L1752 720 L1765 740 L1768 770 L1764 800 L1766 830 L1760 860 L1745 888"/>
<path d="M1540 627 L1535 680"/>
</g>
<!-- roads -->
<g fill="none" stroke="#eeb0a0" stroke-width="1">
<path d="M1466 627 L1467.7 663 L1469 682 L1481.5 710 L1485.7 731 L1488.5 750"/>
<path d="M1440 627 L1466 663"/>
<path d="M1516 627 L1512 661.6 L1517.6 679.6 L1508 713 L1506.5 750"/>
<path d="M1506.5 726.7 L1542.5 708.7 L1600 721 L1660 718 L1720 715"/>
<path d="M1562 710 L1600 643.6 L1612 627"/>
<path d="M1440 800 L1430 888"/>
<path d="M1340 680 L1365 760 L1385 830"/>
<path d="M1690 627 L1700 660 L1715 690 L1700 700 L1640 710 L1570 715"/>
<path d="M1530 800 L1560 805 L1590 820 L1640 830 L1700 860 L1750 888"/>
<path d="M1869 638 L1890 690 L1895 720"/>

<path d="M1620 760 L1660 790 L1700 800 L1760 830"/>
</g>
<!-- admin borders -->
<g fill="none" stroke="#c4b6cc" stroke-width="1">
<path d="M1440 654.7 L1460.8 650.5 L1499.6 652 L1502 668.5 L1484 696 L1467.7 706 L1450 700"/>
<path d="M1527 682 L1534 689 L1564.7 672.7 L1578.5 661.6 L1582.7 647.8 L1586.8 627"/>
<path d="M1578.5 661.6 L1600 664.4 L1640 660 L1680 650 L1700 680"/>
<path d="M1492.6 627 L1495.4 643.6 L1502 654.7"/>
<path d="M1750 668 L1780 676 L1810 670 L1840 678"/>
<path d="M1650 760 L1700 770 L1760 800 L1800 790 L1850 800"/>
<path d="M1640 760 L1650 800 L1690 840"/>
<path d="M1452 700 L1470 730 L1478 760"/>
<path d="M1600 690 L1630 700 L1660 690 L1700 700 L1740 690"/>
<path d="M1860 760 L1880 800 L1920 810"/>
<path d="M1190 627 L1200 645 L1215 655"/><path d="M1210 627 L1218 650"/><path d="M1235 627 L1232 648"/>
</g>
<!-- national borders -->
<g fill="none" stroke="#a596b0" stroke-width="2">
<path d="M1402.5 627 L1404 636 L1390.4 645 L1389 664.8 L1384.4 683 L1372.3 687.4 L1367.8 695 L1370.8 711.6 L1382.9 729.7 L1393.4 741.8 L1401 748"/>
<path d="M1417.6 787 L1416 802 L1420.6 817.4 L1428.2 828 L1432.7 840 L1435.7 855 L1440.3 870 L1438.8 888"/>
<path d="M1576 787 L1580.7 779.7"/>
<path d="M1580.7 785 L1586.8 802.3 L1598.9 825 L1605 841.6 L1620 847.6"/>
<path d="M1576 748 L1590 745 L1605 741 L1616 739.5 L1665 735 L1691 733 L1714 734 L1721 739.5 L1729 734 L1740 726 L1744 717 L1742 702 L1746 683 L1747.5 668 L1738 659 L1736 649.5 L1719 642 L1714 627"/>
<path d="M1729 739.5 L1732.5 743 L1747.5 747 L1759 751 L1766 739.5 L1768 736 L1781 732 L1794 724.5 L1804 732 L1813 735.8 L1826 728 L1841 720.8 L1847 707.6 L1849 689 L1843 679.5 L1834 664.5 L1830 655 L1841 645.75 L1826 636.4 L1819 627"/>
<path d="M1841 720.8 L1839 739.5 L1846 770 L1849 787 L1847 834 L1840 845 L1822.5 852.5 L1804 860 L1785 867.5 L1766 886 L1764 888"/>

</g>
<!-- labels -->
<g font-family="Liberation Sans" fill="#55555f">
<text x="1331" y="637" font-style="italic" fill="#8a6f96" font-size="12">Mon</text>
<text x="1443" y="676" font-size="11">นครสวรรค์</text>
<text x="1365" y="723" fill="#8a6f96" font-size="11">จังหวัดกาญจนบุรี</text>
<text x="1520" y="708" fill="#8a6f96" font-size="11">จังหวัดนครราชสีมา</text>
<circle cx="1490" cy="736" r="2" fill="none" stroke="#555" stroke-width="1"/>
<text x="1495" y="741" font-size="11">พระนครศรีอยุธยา</text>
<text x="1467" y="807" fill="#8a6f96" font-size="14">ประเทศไทย</text>
<text x="1511" y="836" font-size="11">ระยอง</text>
<text x="1354" y="843" font-style="italic" fill="#8a6f96" font-size="11">Tanintharyi</text>
<text x="1366" y="855" font-style="italic" fill="#8a6f96" font-size="11">Region</text>
<text x="1683" y="687" font-size="11">อุบลราชธานี</text>
<text x="1745" y="708" font-size="11">ปากเซ</text>
<text x="1791" y="697" font-size="11">เซกอง</text>
<text x="1838" y="638" font-size="12">Huế</text>
<text x="1848" y="659" fill="#8a6f96" font-size="14">Việt Nam</text>
<text x="1894" y="710" font-size="12">Quả</text>
<text x="1900" y="723" font-size="12">Ngã</text>
<text x="1852" y="752" font-size="14">Pleiku</text>
<text x="1849" y="806" font-size="12">Buôn Ma</text>
<text x="1858" y="819" font-size="12">Thuột</text>
<text x="1856" y="879" font-size="12">Phan Rang-</text>
<text x="1618" y="740" font-size="11">กรุงสำโรง</text>
<text x="1689" y="759" font-size="11">กรุงพระวิหาร</text>
<text x="1632" y="782" font-size="11">กรุงเสียมราบ</text>
<text x="1600" y="814" font-size="11">กรุงพระตะบอง</text>
<text x="1748" y="829" font-size="11">กรุงกระแจะ</text>
<text x="1668" y="851" fill="#8a6f96" font-size="12">พระราชอาณาจักร</text>
<text x="1695" y="867" fill="#8a6f96" font-size="12">กัมพูชา</text>
<text x="1792" y="850" font-size="11">กรุงเซนมโนรมย์</text>
<text x="1584" y="873" font-size="11">กรุงเขมรภูมินท์</text>
<text x="1348" y="760" font-size="11">ทวาย</text>
<text x="1360" y="776" font-size="11">เมือง</text>
<text x="1065" y="893" font-size="13" fill="#333" stroke="#fff" stroke-width="3" paint-order="stroke">Port Blair</text>
<text x="1162" y="886" font-size="13" fill="#333">500 km</text>
</g>
</svg>
<!-- bottom right attribution box -->
<div class="a" style="left:1757px;top:881px;width:163px;height:7px;background:#fff;border:1px solid #555;border-right:none;border-bottom:none"></div>
<!-- pan control -->
<div class="a" style="left:1063px;top:631px;width:55px;height:56px;border-radius:50%;background:radial-gradient(circle at 40% 35%,#fff 55%,#e9e9e9 100%);border:1px solid #aaa;box-shadow:0 1px 3px rgba(0,0,0,0.25)"></div>
<svg class="a" style="left:1063px;top:631px" width="55" height="56" viewBox="0 0 55 56">
<g fill="none" stroke="#2182da" stroke-width="3.2" stroke-linecap="round" stroke-linejoin="round">
<path d="M22 12 L27.5 7 L33 12"/><path d="M22 43 L27.5 48 L33 43"/><path d="M12 22.5 L7.5 28 L12 33.5"/><path d="M43 22.5 L47.5 28 L43 33.5"/>
</g>
<text x="27.5" y="33" text-anchor="middle" font-family="Liberation Serif" font-weight="bold" font-size="15" fill="#2172c0">6</text>
</svg>
<!-- zoom control -->
<div class="a" style="left:1068px;top:714px;width:45px;height:87px;border-radius:22px;background:linear-gradient(90deg,#f4f4f4,#fff 40%,#e6e6e6);border:1px solid #b4b4b4;box-shadow:0 2px 4px rgba(0,0,0,0.3)"></div>
<div class="a" style="left:1069px;top:756px;width:43px;height:2px;background:#e2e2e2"></div>
<svg class="a" style="left:1068px;top:714px" width="45" height="87" viewBox="0 0 45 87">
<path d="M22 17.5 V35.5 M13 26.5 H31" stroke="#2182da" stroke-width="2.2"/>
<path d="M13 63 H31" stroke="#2182da" stroke-width="2.6"/>
</svg>
<!-- popup -->
<div class="a" style="left:1401px;top:747px;width:176px;height:41px;background:#fff;border:1px solid #2a2a2a;border-radius:6px"></div>
<div class="a nw f" style="transform:scaleX(0.8929);--w:125px;left:1426px;top:754px;font-size:17px;line-height:24px;color:#333">ไม่พบพิกัดโครงการ</div>


<script>
(function(){var els=document.querySelectorAll('.f,.fr');for(var i=0;i<els.length;i++){var e=els[i];var w=parseFloat(e.style.getPropertyValue('--w'));e.style.transform='none';var r=e.getBoundingClientRect().width;if(r>0&&w>0){e.style.transform='scaleX('+(w/r).toFixed(4)+')';}}})();
</script>

</body></html>
